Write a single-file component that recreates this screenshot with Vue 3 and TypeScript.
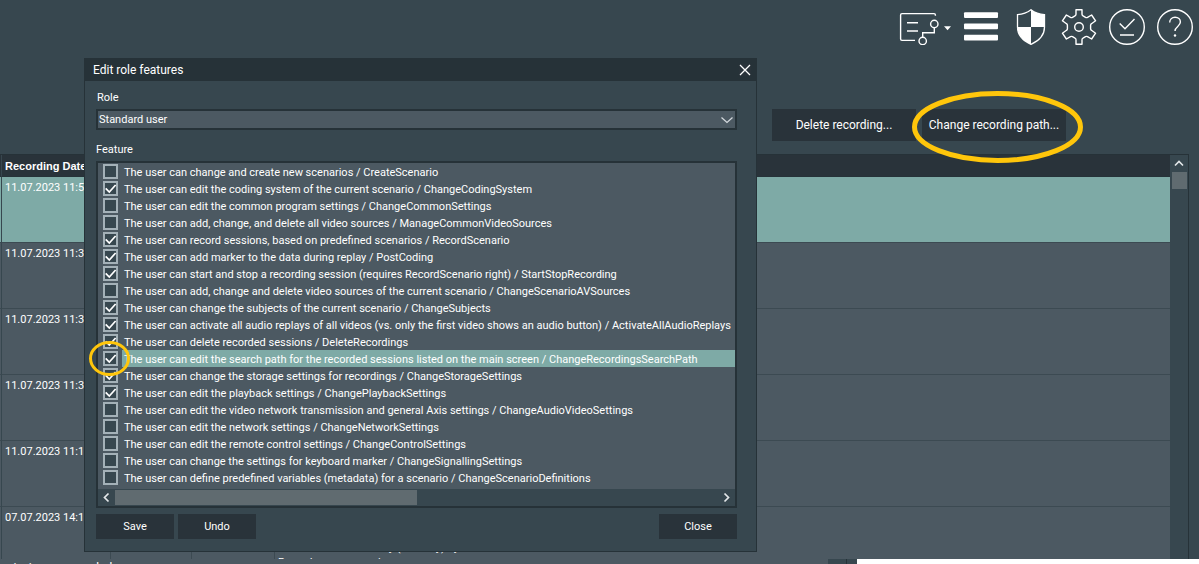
<script setup lang="ts">
import { ref } from 'vue'

interface Feature {
  text: string
  name: string
  on: boolean
}

interface Recording {
  date: string
  lines: string[]
}

const features = ref<Feature[]>([
  { text: 'The user can change and create new scenarios', name: 'CreateScenario', on: false },
  { text: 'The user can edit the coding system of the current scenario', name: 'ChangeCodingSystem', on: true },
  { text: 'The user can edit the common program settings', name: 'ChangeCommonSettings', on: false },
  { text: 'The user can add, change, and delete all video sources', name: 'ManageCommonVideoSources', on: false },
  { text: 'The user can record sessions, based on predefined scenarios', name: 'RecordScenario', on: true },
  { text: 'The user can add marker to the data during replay', name: 'PostCoding', on: true },
  { text: 'The user can start and stop a recording session (requires RecordScenario right)', name: 'StartStopRecording', on: true },
  { text: 'The user can add, change and delete video sources of the current scenario', name: 'ChangeScenarioAVSources', on: false },
  { text: 'The user can change the subjects of the current scenario', name: 'ChangeSubjects', on: true },
  { text: 'The user can activate all audio replays of all videos (vs. only the first video shows an audio button)', name: 'ActivateAllAudioReplays', on: true },
  { text: 'The user can delete recorded sessions', name: 'DeleteRecordings', on: true },
  { text: 'The user can edit the search path for the recorded sessions listed on the main screen', name: 'ChangeRecordingsSearchPath', on: true },
  { text: 'The user can change the storage settings for recordings', name: 'ChangeStorageSettings', on: true },
  { text: 'The user can edit the playback settings', name: 'ChangePlaybackSettings', on: true },
  { text: 'The user can edit the video network transmission and general Axis settings', name: 'ChangeAudioVideoSettings', on: false },
  { text: 'The user can edit the network settings', name: 'ChangeNetworkSettings', on: false },
  { text: 'The user can edit the remote control settings', name: 'ChangeControlSettings', on: false },
  { text: 'The user can change the settings for keyboard marker', name: 'ChangeSignallingSettings', on: false },
  { text: 'The user can define predefined variables (metadata) for a scenario', name: 'ChangeScenarioDefinitions', on: false },
])

const selectedFeature = 'ChangeRecordingsSearchPath'
const role = ref('Standard user')

const recordings: Recording[] = [
  { date: '11.07.2023 11:56', lines: [] },
  { date: '11.07.2023 11:37', lines: [] },
  { date: '11.07.2023 11:36', lines: [] },
  { date: '11.07.2023 11:36', lines: [] },
  { date: '11.07.2023 11:18', lines: [] },
  { date: '07.07.2023 14:10', lines: ['', '', 'Session room summary (memory) by', 'Recorder name session'] },
]
</script>

<template>
  <div class="page">
    <header class="toolbar">
      <button class="tool" aria-label="Scenario">
        <svg width="52" height="36" viewBox="0 0 52 36" fill="none" stroke="#fff" stroke-width="1.4">
          <path d="M36.4 6.8V6q0-1.4-1.4-1.4H3Q1.6 4.600 1.600 6v24q0 1.400 1.400 1.400h13M8 13.700h11M8 22h11" />
          <circle cx="35.300" cy="15" r="3.700" />
          <circle cx="23.700" cy="32" r="3.700" />
          <path d="M35.300 18.700v5H23.700v4.600" />
          <path d="M45 17.300h7l-3.500 4z" fill="#fff" stroke="none" />
        </svg>
      </button>
      <button class="tool menu" aria-label="Menu">
        <svg width="36" height="36" viewBox="0 0 36 36" fill="#fff">
          <rect x="1" y="3.200" width="34" height="5.800" rx="1" />
          <rect x="1" y="14.500" width="34" height="5.800" rx="1" />
          <rect x="1" y="25.700" width="34" height="5.800" rx="1" />
        </svg>
      </button>
      <button class="tool" aria-label="Administration">
        <svg width="36" height="36" viewBox="0 0 36 36">
          <path d="M18 .7C14 3.800 9 5.300 4.500 5.600V18c0 8 6 14 13.500 17.300C25.500 32 31.500 26 31.500 18V5.600C27 5.300 22 3.800 18 .7z" fill="none" stroke="#fff" stroke-width="1.300" />
          <path d="M18 .7V18H31.500V5.600C27 5.300 22 3.800 18 .7zM4.500 18H18v17.300C10.500 32 4.500 26 4.500 18z" fill="#fff" />
        </svg>
      </button>
      <button class="tool" aria-label="Settings">
        <svg width="36" height="36" viewBox="0 0 36 36" fill="none" stroke="#fff" stroke-width="1.400" stroke-linejoin="round">
          <path d="M15 .8h6v4.500q0 1 1 1.500l2.500 1.500q1 .6 2 .1L30.600 6l4 5.800-4.100 2.900q-.9.600-.9 1.600v3.400q0 1 .9 1.600l4.100 2.900-4 5.800-4.100-2.400q-1-.5-2 .1L22 29.200q-1 .5-1 1.500v4.500h-6v-4.500q0-1-1-1.500l-2.500-1.500q-1-.6-2-.1L5.400 30l-4-5.800 4.100-2.900q.9-.6.900-1.600v-3.400q0-1-.9-1.600l-4.100-2.900 4-5.800 4.100 2.400q1 .5 2-.1L14 6.800q1-.5 1-1.500z" />
          <circle cx="18" cy="18" r="4.300" />
        </svg>
      </button>
      <button class="tool" aria-label="Tasks">
        <svg width="36" height="36" viewBox="0 0 36 36" fill="none" stroke="#fff" stroke-width="1.400">
          <circle cx="18" cy="18" r="17.300" />
          <path d="M10.700 14.500l5.300 5.300L25.500 10M11 26h14" />
        </svg>
      </button>
      <button class="tool" aria-label="Help">
        <svg width="36" height="36" viewBox="0 0 36 36" fill="none" stroke="#fff" stroke-width="1.400">
          <circle cx="18" cy="18" r="17.300" />
          <path d="M12.700 13.500c0-3.200 2.300-5.300 5.400-5.300s5.300 2 5.300 4.900c0 4.300-5.400 4.400-5.400 8.900" />
          <circle cx="18" cy="26.500" r="1.200" fill="#fff" stroke="none" />
        </svg>
      </button>
    </header>

    <div class="actions">
      <button class="wide">Delete recording...</button>
      <div class="marked">
        <button class="wide">Change recording path...</button>
        <svg class="ring big" width="171" height="72" viewBox="0 0 171 72" fill="none" stroke="#ffc60b" stroke-width="5">
          <ellipse cx="85.500" cy="36" rx="83" ry="33.500" />
        </svg>
      </div>
    </div>

    <main class="recordings">
      <div class="grid">
        <table>
          <colgroup>
            <col class="c-gutter" />
            <col class="c-date" />
            <col class="c-length" />
            <col class="c-state" />
            <col />
          </colgroup>
          <thead>
            <tr><th></th><th>Recording Date</th><th></th><th></th><th></th></tr>
          </thead>
          <tbody>
            <tr v-for="(rec, i) in recordings" :key="i" :class="{ current: i === 0 }">
              <td></td>
              <td>{{ rec.date }}</td>
              <td></td>
              <td></td>
              <td><div v-for="(line, n) in rec.lines" :key="n" class="line">{{ line }}</div></td>
            </tr>
          </tbody>
        </table>
      </div>
      <div class="vbar">
        <svg width="18" height="17" viewBox="0 0 18 17" fill="none" stroke="#e4e8ea" stroke-width="1.600"><path d="M5 10.500L9 6.500l4 4" /></svg>
        <div class="vthumb"></div>
      </div>
    </main>

    <footer class="bottom">
      <div class="status">mission room ended</div>
      <div class="corner"></div>
      <div class="blank"></div>
    </footer>

    <section class="dialog" role="dialog" aria-labelledby="dlg-title">
      <div class="titlebar">
        <span id="dlg-title">Edit role features</span>
        <button class="x" aria-label="Close dialog">
          <svg width="12" height="12" viewBox="0 0 12 12" stroke="#fff" stroke-width="1.300"><path d="M1 1l10 10M11 1L1 11" /></svg>
        </button>
      </div>
      <div class="content">
        <label class="caption role" for="role">Role</label>
        <div class="picker">
          <select id="role" v-model="role">
            <option>Standard user</option>
          </select>
          <svg class="chevron" width="12" height="8" viewBox="0 0 12 8" fill="none" stroke="#d5dade" stroke-width="1.200"><path d="M.5 1.500L6 6.500l5.500-5" /></svg>
        </div>
        <div id="feature-label" class="caption">Feature</div>
        <div class="listbox">
          <ul aria-labelledby="feature-label">
            <li v-for="f in features" :key="f.name">
              <label>
                <span class="box">
                  <input v-model="f.on" type="checkbox" />
                  <svg v-if="f.on" width="15" height="15" viewBox="0 0 15 15" fill="none" stroke="#fff" stroke-width="1.700"><path d="M2.700 7.300l3.600 3.700 6.300-7" /></svg>
                </span>
                <span class="text" :class="{ picked: f.name === selectedFeature }">{{ f.text }} / {{ f.name }}</span>
              </label>
              <svg v-if="f.name === selectedFeature" class="ring small" width="41" height="35" viewBox="0 0 41 35" fill="none" stroke="#ffc60b" stroke-width="3">
                <ellipse cx="20.500" cy="17.500" rx="19" ry="16" />
              </svg>
            </li>
          </ul>
          <div class="hbar">
            <svg width="17" height="17" viewBox="0 0 17 17" fill="none" stroke="#e4e8ea" stroke-width="1.700"><path d="M10.500 4.500l-4 4 4 4" /></svg>
            <div class="htrack"><div class="hthumb"></div></div>
            <svg width="17" height="17" viewBox="0 0 17 17" fill="none" stroke="#e4e8ea" stroke-width="1.700"><path d="M6.500 4.500l4 4-4 4" /></svg>
          </div>
        </div>
        <div class="buttons">
          <button>Save</button>
          <button>Undo</button>
          <button class="last">Close</button>
        </div>
      </div>
    </section>
  </div>
</template>

<style>
body {
  margin: 0;
  background: #37474f;
}
</style>

<style scoped>
.page {
  position: relative;
  display: flex;
  flex-direction: column;
  height: 100vh;
  overflow: hidden;
  background: #37474f;
  color: #fff;
  font-family: Roboto, "Noto Sans", sans-serif;
  font-size: 12px;
}
button {
  margin: 0;
  padding: 0;
  border: 0;
  background: #29333a;
  color: #fff;
  font: inherit;
}
svg {
  display: block;
}
.toolbar {
  display: flex;
  justify-content: flex-end;
  gap: 12px;
  padding: 9px 6px 0;
}
.tool {
  background: none;
}
.menu {
  margin-right: 2px;
}
.actions {
  display: flex;
  justify-content: flex-end;
  gap: 6px;
  margin: 64px 133px 13px 0;
}
.wide {
  width: 144px;
  height: 32px;
}
.marked {
  position: relative;
}
.marked .wide {
  display: block;
}
.ring {
  position: absolute;
  z-index: 2;
  pointer-events: none;
}
.big {
  left: -10px;
  top: -18px;
}
.small {
  left: -9px;
  top: -9px;
}
.recordings {
  display: flex;
  flex: 1;
  min-height: 0;
  margin-right: 10px;
  border: 1px solid #263238;
  border-width: 1px 1px 0 0;
}
.grid {
  flex: 1;
  overflow: hidden;
  background: #4c5962;
}
table {
  width: 100%;
  table-layout: fixed;
  border-collapse: separate;
  border-spacing: 0;
}
.c-gutter {
  width: 2px;
}
.c-date {
  width: 109px;
}
.c-length {
  width: 81px;
}
.c-state {
  width: 83px;
}
th {
  height: 21px;
  padding: 0 3px;
  border-bottom: 1px solid #263238;
  background: #29333a;
  font: bold 11px "Liberation Sans", sans-serif;
  text-align: left;
  white-space: nowrap;
}
td {
  height: 62px;
  padding: 3px 3px 0;
  border-right: 1px solid #3c4a52;
  border-bottom: 1px solid #3c4a52;
  vertical-align: top;
  font-size: 11px;
  line-height: 15px;
  white-space: nowrap;
}
td:first-child,
th:first-child {
  padding: 0;
  border-right: 1px solid #37474f;
}
td:last-child {
  border-right: 0;
}
.current td {
  background: #7eaaa6;
}
.line {
  height: 15px;
}
.vbar {
  width: 18px;
  background: #37474f;
}
.vthumb {
  height: 17px;
  margin: 0 1px 0 2px;
  background: #606b70;
}
.bottom {
  display: flex;
  height: 5px;
  overflow: hidden;
}
.status {
  flex: 828;
  padding-left: 3px;
  background: #4c5962;
  line-height: 18px;
}
.corner {
  width: 18px;
  margin-right: 10px;
  border-right: 1px solid #263238;
}
.blank {
  flex: 343;
  background: #fff;
}
.dialog {
  position: absolute;
  left: 84px;
  top: 58px;
  width: 673px;
  box-sizing: border-box;
  border: 1px solid #263238;
  background: #37474f;
}
.titlebar {
  display: flex;
  align-items: center;
  justify-content: space-between;
  height: 22px;
  padding: 0 5px 0 8px;
  background: #263238;
}
.content {
  padding: 9px 19px 12px 11px;
  font-size: 11px;
}
.caption {
  display: block;
  line-height: 16px;
}
.role {
  margin: 0 0 3px 1px;
}
.picker {
  position: relative;
  margin-bottom: 12px;
}
select {
  display: block;
  width: 100%;
  height: 21px;
  padding: 0 0 0 1px;
  border: 2px solid #263238;
  border-radius: 0;
  background: #4c5962;
  color: #fff;
  font: inherit;
  appearance: none;
}
.chevron {
  position: absolute;
  right: 4px;
  top: 7px;
}
.listbox {
  margin-top: 3px;
  border: 2px solid #263238;
  background: #4c5962;
}
ul {
  margin: 0;
  padding: 0 0 3px;
  list-style: none;
}
li {
  position: relative;
}
li label {
  display: flex;
  height: 17px;
}
.box {
  display: grid;
  margin: 1px 4px 0 5px;
}
.box > * {
  grid-area: 1 / 1;
}
input {
  width: 15px;
  height: 15px;
  margin: 0;
  border: 2px solid #a4b1b8;
  background: #37474f;
  appearance: none;
}
.box svg {
  z-index: 1;
  pointer-events: none;
}
.text {
  flex: 1;
  padding-left: 2px;
  line-height: 19px;
  white-space: nowrap;
}
.picked {
  background: #7eaaa6;
}
.hbar {
  display: flex;
  height: 17px;
  background: #37474f;
}
.htrack {
  flex: 1;
  padding: 1px 0;
}
.hthumb {
  width: 50%;
  height: 15px;
  background: #606b70;
}
.buttons {
  display: flex;
  gap: 4px;
  margin-top: 6px;
}
.buttons button {
  width: 78px;
  height: 25px;
}
.buttons .last {
  margin-left: auto;
}
</style>
